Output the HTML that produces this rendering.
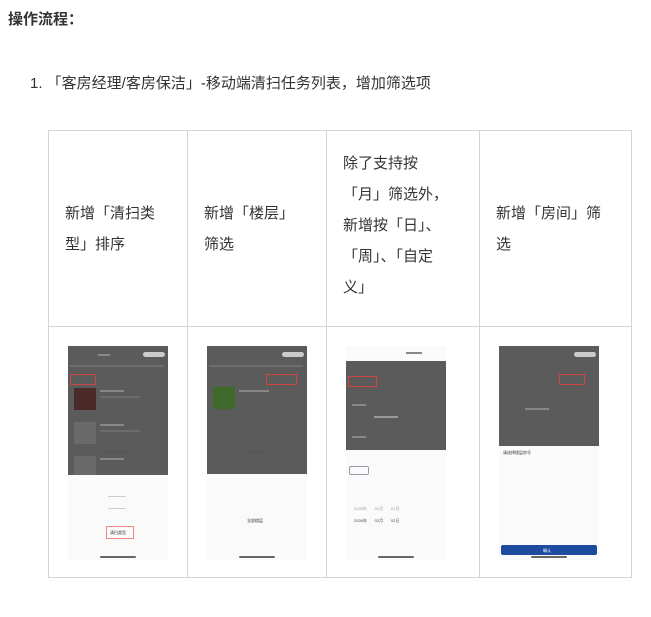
<!DOCTYPE html>
<html><head><meta charset="utf-8"><style>
body{margin:0;width:651px;height:617px;background:#fff;font-family:"Liberation Sans","Noto Sans CJK SC",sans-serif;color:#333;position:relative;overflow:hidden}
.a{position:absolute}
.t{font-size:15px;line-height:31px;color:#333}
.v{position:absolute;top:130px;width:1px;height:448px;background:#d4d4d4}
.h{position:absolute;left:48px;width:584px;height:1px;background:#d4d4d4}
.ph{position:absolute;width:100px;height:214px;top:346px;background:#fafafa;overflow:hidden}
.dk{position:absolute;left:0;width:100px;background:#5b5b5b}
.bar{position:absolute;bottom:2px;left:32px;width:36px;height:2px;background:#666;border-radius:1px}
.s{position:absolute;font-size:4px;color:#999;white-space:nowrap}
.ln{position:absolute;height:2px;background:#777}
</style></head><body>
<div class="a" style="left:8px;top:8px;font-size:15px;font-weight:bold;color:#333">操作流程：</div>
<div class="a" style="left:30px;top:72px;font-size:15px;color:#333">1.&nbsp;「客房经理/客房保洁」-移动端清扫任务列表，增加筛选项</div>

<div class="h" style="top:130px"></div><div class="h" style="top:326px"></div><div class="h" style="top:577px"></div>
<div class="v" style="left:48px"></div><div class="v" style="left:187px"></div><div class="v" style="left:326px"></div><div class="v" style="left:479px"></div><div class="v" style="left:631px"></div>

<div class="a t" style="left:65px;top:198px;width:110px">新增「清扫类<br>型」排序</div>
<div class="a t" style="left:204px;top:198px;width:110px">新增「楼层」<br>筛选</div>
<div class="a t" style="left:343px;top:148px;width:125px">除了支持按<br>「月」筛选外，<br>新增按「日」、<br>「周」、「自定<br>义」</div>
<div class="a t" style="left:496px;top:198px;width:125px">新增「房间」筛<br>选</div>

<div class="ph" style="left:68px"><div class="dk" style="top:0;height:129px"></div>
<div class="ln" style="left:30px;top:8px;width:12px;background:#888"></div><div class="ln" style="left:75px;top:6px;width:22px;height:5px;background:#ccc;border-radius:3px"></div>
<div class="ln" style="left:2px;top:19px;width:94px;background:#6e6e6e"></div>
<div class="a" style="left:6px;top:42px;width:22px;height:22px;background:#4a2a26"></div>
<div class="ln" style="left:32px;top:44px;width:24px;background:#888"></div><div class="ln" style="left:32px;top:50px;width:40px;background:#6c6c6c"></div>
<div class="a" style="left:6px;top:76px;width:22px;height:22px;background:#6a6a6a"></div>
<div class="ln" style="left:32px;top:78px;width:24px;background:#888"></div><div class="ln" style="left:32px;top:84px;width:40px;background:#6c6c6c"></div>
<div class="a" style="left:6px;top:110px;width:22px;height:19px;background:#6a6a6a"></div>
<div class="ln" style="left:32px;top:112px;width:24px;background:#888"></div>
<div class="a" style="left:2px;top:28px;width:24px;height:9px;border:1px solid #c44"></div>
<div class="s" style="left:36px;top:104px;color:#555">请选择排序方式</div>
<div class="ln" style="left:40px;top:150px;width:18px;height:1px;background:#ccc"></div>
<div class="ln" style="left:40px;top:162px;width:18px;height:1px;background:#ccc"></div>
<div class="a" style="left:38px;top:180px;width:26px;height:11px;border:1px solid #e88"></div>
<div class="s" style="left:42px;top:184px;color:#333">清扫类型</div>
<div class="bar"></div></div>

<div class="ph" style="left:207px"><div class="dk" style="top:0;height:128px"></div>
<div class="ln" style="left:75px;top:6px;width:22px;height:5px;background:#ccc;border-radius:3px"></div>
<div class="ln" style="left:2px;top:19px;width:94px;background:#6e6e6e"></div>
<div class="a" style="left:6px;top:41px;width:22px;height:22px;background:#3e6b2c"></div>
<div class="ln" style="left:32px;top:44px;width:30px;background:#888"></div>
<div class="a" style="left:59px;top:28px;width:29px;height:9px;border:1px solid #c44"></div>
<div class="s" style="left:38px;top:104px;color:#555">请选择楼层</div>
<div class="s" style="left:40px;top:172px;color:#333">全部楼层</div>
<div class="bar"></div></div>

<div class="ph" style="left:346px"><div class="dk" style="top:15px;height:89px"></div>
<div class="ln" style="left:60px;top:6px;width:16px;background:#888"></div>
<div class="a" style="left:2px;top:30px;width:27px;height:9px;border:1px solid #c44"></div>
<div class="ln" style="left:6px;top:58px;width:14px;background:#888"></div><div class="ln" style="left:28px;top:70px;width:24px;background:#999"></div>
<div class="ln" style="left:6px;top:90px;width:14px;background:#888"></div>
<div class="a" style="left:3px;top:120px;width:18px;height:7px;border:1px solid #99a;border-radius:2px"></div>
<div class="s" style="left:8px;top:160px">2025年 &nbsp;&nbsp;&nbsp;&nbsp;&nbsp;&nbsp;01月 &nbsp;&nbsp;&nbsp;&nbsp;&nbsp;&nbsp;01日</div>
<div class="s" style="left:8px;top:172px;color:#444">2026年 &nbsp;&nbsp;&nbsp;&nbsp;&nbsp;&nbsp;02月 &nbsp;&nbsp;&nbsp;&nbsp;&nbsp;&nbsp;02日</div>
<div class="bar"></div></div>

<div class="ph" style="left:499px"><div class="dk" style="top:0;height:100px"></div>
<div class="ln" style="left:75px;top:6px;width:22px;height:5px;background:#ccc;border-radius:3px"></div>
<div class="a" style="left:60px;top:28px;width:24px;height:9px;border:1px solid #c44"></div>
<div class="ln" style="left:26px;top:62px;width:24px;background:#888"></div>
<div class="s" style="left:4px;top:104px;color:#333">请选择楼层房号</div>
<div class="a" style="left:2px;top:199px;width:96px;height:10px;background:#1e4aa0;border-radius:2px"></div>
<div class="s" style="left:44px;top:202px;color:#fff">确认</div>
<div class="bar"></div></div>
</body></html>
